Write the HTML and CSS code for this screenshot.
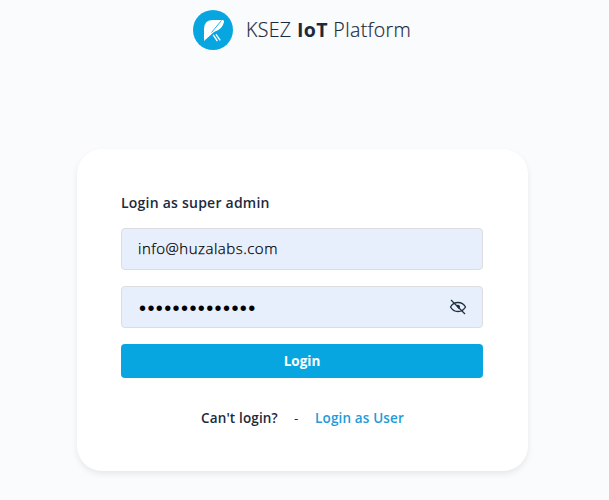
FILE: index.html
```html
<!DOCTYPE html>
<html lang="en">
<head>
<meta charset="utf-8">
<title>KSEZ IoT Platform</title>
<link rel="stylesheet" href="styles.css">
</head>
<body>
<header class="brand">
  <svg class="logo" viewBox="0 0 40 40" aria-hidden="true">
    <circle cx="20" cy="20" r="20" fill="#08a6e1"/>
    <path d="M11 31V19Q11 10 20 10H30Q31.300 10.300 31 12Q29.500 19.500 21 22Z" fill="#fff"/>
    <path d="M28.500 10.500L18.500 22.500" stroke="#08a6e1" stroke-width="0.900"/>
    <path d="M20.200 24.800L24.300 31M23 24.300L27.200 30.300" stroke="#fff" stroke-width="1.400"/>
  </svg>
  <h1 class="title">KSEZ <b>IoT</b> Platform</h1>
</header>
<main class="card">
  <h2 class="heading"><span>Login as super admin</span></h2>
  <form class="form">
    <div class="field"><input class="input" type="text" value="info@huzalabs.com"></div>
    <div class="field">
      <input class="input password" type="password" value="00000000000000">
      <svg class="eye" viewBox="0 0 18 18" aria-hidden="true">
        <path d="M1.500 9Q4 4.500 9 4.500T16.500 9Q14 13.500 9 13.500T1.500 9Z"/>
        <path d="M7 7.500Q9 6 11 8Q11.500 10 9.500 11Z" fill="#203040" stroke="none"/>
        <path d="M2 2L16 16"/>
      </svg>
    </div>
    <button class="submit" type="button">Login</button>
  </form>
  <p class="links"><span class="question">Can't login?</span><span class="dash">-</span><a class="user">Login as User</a></p>
</main>
</body>
</html>
```
FILE: styles.css
```css
* { box-sizing: border-box; }
body { margin: 0; height: 500px; overflow: hidden; background: #fafbfd; color: #1b2a3c; font-family: "Open Sans", sans-serif; }
.brand { display: flex; align-items: center; height: 40px; margin: 10px 0 0 193px; gap: 13px; }
.logo { width: 40px; height: 40px; }
.title { margin: 0; font-size: 19.5px; font-weight: 300; line-height: 40px; letter-spacing: .38px; white-space: nowrap; -webkit-text-stroke: .2px #1b2a3c; }
.title b { font-weight: 700; -webkit-text-stroke: 0; }
.card { width: 451px; height: 322px; margin: 99px 0 0 77px; padding: 44px 45px 0 44px; background: #fff; border-radius: 25px; box-shadow: 0 3px 6px rgba(0, 0, 0, .08); }
.heading { margin: 0 0 15px; font-size: 14px; font-weight: 600; line-height: 20px; letter-spacing: .23px; }
.form { display: flex; flex-direction: column; gap: 16px; }
.field { position: relative; height: 42px; }
.input { display: block; width: 100%; height: 42px; padding: 0 16px 2px; border: 1px solid #dddde1; border-radius: 4px; outline: 0; background: #e8effc; color: #000; font-family: "Open Sans", sans-serif; font-size: 15px; font-weight: 300; letter-spacing: .5px; -webkit-text-stroke: .25px #000; }
.password { padding: 2px 16px 0 17px; font-family: "Liberation Sans", sans-serif; font-size: 20px; letter-spacing: 1.4px; -webkit-text-stroke: 0; }
.eye { position: absolute; right: 16px; top: 12px; width: 18px; height: 18px; fill: none; stroke: #203040; stroke-width: 1.3; }
.submit { height: 34px; padding: 0; border: 0; border-radius: 4px; background: #08a6e1; color: #fff; font-family: "Open Sans", sans-serif; font-size: 13.5px; font-weight: 700; }
.links { display: flex; margin: 30px 0 0 80px; font-size: 13.5px; font-weight: 600; line-height: 20px; letter-spacing: .15px; white-space: nowrap; }
.question { width: 93px; }
.dash { width: 21px; font-weight: 400; }
.user { color: #219bd9; }
```
